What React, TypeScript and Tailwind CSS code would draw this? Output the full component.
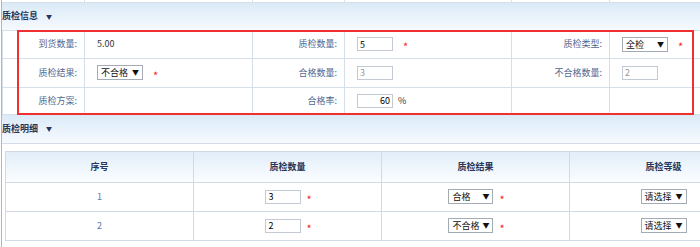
import React from "react";

const font = "font-['Noto_Sans_CJK_SC','Noto_Sans',sans-serif]";

function Star({ gap = "ml-[10px]" }: { gap?: string }) {
  return <span className={`${gap} mt-[5px] text-[#ff2020] text-[11px] leading-none`}>*</span>;
}

function FakeSelect({ label, w = "w-[46px]" }: { label: string; w?: string }) {
  return (
    <span className={`inline-flex items-center justify-between ${w} h-[15px] border border-[#a3abb5] bg-white pl-[3px] pr-[3px] text-[9px] text-[#111] leading-none`}>
      <span>{label}</span>
      <span className="text-[7px]">▼</span>
    </span>
  );
}

function Box({ value, disabled, right }: { value: string; disabled?: boolean; right?: boolean }) {
  return (
    <span
      className={`inline-flex items-center w-[36px] h-[14px] border border-[#c3cad3] bg-white px-[2px] text-[9px] leading-none ${
        disabled ? "text-[#999]" : "text-[#000]"
      } ${right ? "justify-end" : ""}`}
    >
      {value}
    </span>
  );
}

function SectionHead({ title, h }: { title: string; h: string }) {
  return (
    <div className={`${h} flex items-center gap-[8px] bg-gradient-to-b from-[#dbeaf8] to-[#f6fafe] border-b border-[#d3dde9]`}>
      <span className="text-[9px] font-bold text-[#26355a]">{title}</span>
      <span className="text-[6px] text-[#26355a]">▼</span>
    </div>
  );
}

const infoCols = [82, 168, 92, 167, 98, 170];
const lab = "border border-[#d6e0eb] text-right pr-[7px] text-[9px] text-[#52678f]";
const val = "border border-[#d6e0eb] pl-[12px] text-[9px] text-[#333]";

export default function App() {
  return (
    <div className={`relative w-[700px] h-[247px] overflow-hidden bg-white ${font}`}>
      <div className="ml-[1px] border-l border-[#a9b6c8] h-full">
        {/* tail of the table above */}
        <table className="table-fixed border-collapse w-[777px]">
          <colgroup>
            {infoCols.map((w, i) => (
              <col key={i} style={{ width: w }} />
            ))}
          </colgroup>
          <tbody>
            <tr className="h-[2px]">
              {infoCols.map((_, i) => (
                <td key={i} className="border-r border-b border-[#d6e0eb] p-0" />
              ))}
            </tr>
          </tbody>
        </table>

        <SectionHead title="质检信息" h="h-[28px]" />

        <table className="table-fixed border-collapse w-[777px] -mt-[1px]">
          <colgroup>
            {infoCols.map((w, i) => (
              <col key={i} style={{ width: w }} />
            ))}
          </colgroup>
          <tbody>
            <tr className="h-[28px]">
              <td className={lab}>到货数量:</td>
              <td className={val}>5.00</td>
              <td className={lab}>质检数量:</td>
              <td className={val}>
                <span className="flex items-center">
                  <Box value="5" />
                  <Star />
                </span>
              </td>
              <td className={lab}>质检类型:</td>
              <td className={val}>
                <span className="flex items-center">
                  <FakeSelect label="全检" />
                  <Star />
                </span>
              </td>
            </tr>
            <tr className="h-[29px]">
              <td className={lab}>质检结果:</td>
              <td className={val}>
                <span className="flex items-center">
                  <FakeSelect label="不合格" />
                  <Star />
                </span>
              </td>
              <td className={lab}>合格数量:</td>
              <td className={val}>
                <Box value="3" disabled />
              </td>
              <td className={lab}>不合格数量:</td>
              <td className={val}>
                <Box value="2" disabled />
              </td>
            </tr>
            <tr className="h-[27px]">
              <td className={lab}>质检方案:</td>
              <td className={val}></td>
              <td className={lab}>合格率:</td>
              <td className={val}>
                <span className="flex items-center gap-[5px]">
                  <Box value="60" right />
                  <span className="text-[9px] text-[#333]">%</span>
                </span>
              </td>
              <td className={lab}></td>
              <td className={val}></td>
            </tr>
          </tbody>
        </table>

        <SectionHead title="质检明细" h="h-[29px]" />

        <div className="pt-[7px] pl-[3px]">
          <table className="table-fixed border-collapse w-[752px] border border-[#cfdae6]">
            <colgroup>
              <col className="w-[188px]" />
              <col className="w-[188px]" />
              <col className="w-[188px]" />
              <col className="w-[188px]" />
            </colgroup>
            <thead>
              <tr className="h-[31px] bg-gradient-to-b from-[#e1edf9] to-[#fbfdff]">
                {["序号", "质检数量", "质检结果", "质检等级"].map((t) => (
                  <th key={t} className="border border-[#cfdae6] text-center text-[9px] font-bold text-[#26355a]">
                    {t}
                  </th>
                ))}
              </tr>
            </thead>
            <tbody>
              {[
                { n: "1", q: "3", r: "合格" },
                { n: "2", q: "2", r: "不合格" },
              ].map((row) => (
                <tr key={row.n} className="h-[29px]">
                  <td className="border border-[#cfdae6] text-center text-[9px] text-[#5b78b4]">{row.n}</td>
                  <td className="border border-[#cfdae6]">
                    <span className="flex items-center justify-center pl-[2px]">
                      <Box value={row.q} />
                      <Star gap="ml-[5px]" />
                    </span>
                  </td>
                  <td className="border border-[#cfdae6]">
                    <span className="flex items-center justify-center pl-[2px]">
                      <FakeSelect label={row.r} w="w-[45px]" />
                      <Star gap="ml-[6px]" />
                    </span>
                  </td>
                  <td className="border border-[#cfdae6]">
                    <span className="flex items-center justify-center">
                      <FakeSelect label="请选择" />
                    </span>
                  </td>
                </tr>
              ))}
            </tbody>
          </table>
          <div className="mt-[6px] border-t border-[#d3dde9]" />
        </div>
      </div>

      {/* red annotation frame */}
      <div className="absolute left-[17px] top-[30px] w-[677px] h-[85px] border-2 border-[#f03030] pointer-events-none" />
    </div>
  );
}
